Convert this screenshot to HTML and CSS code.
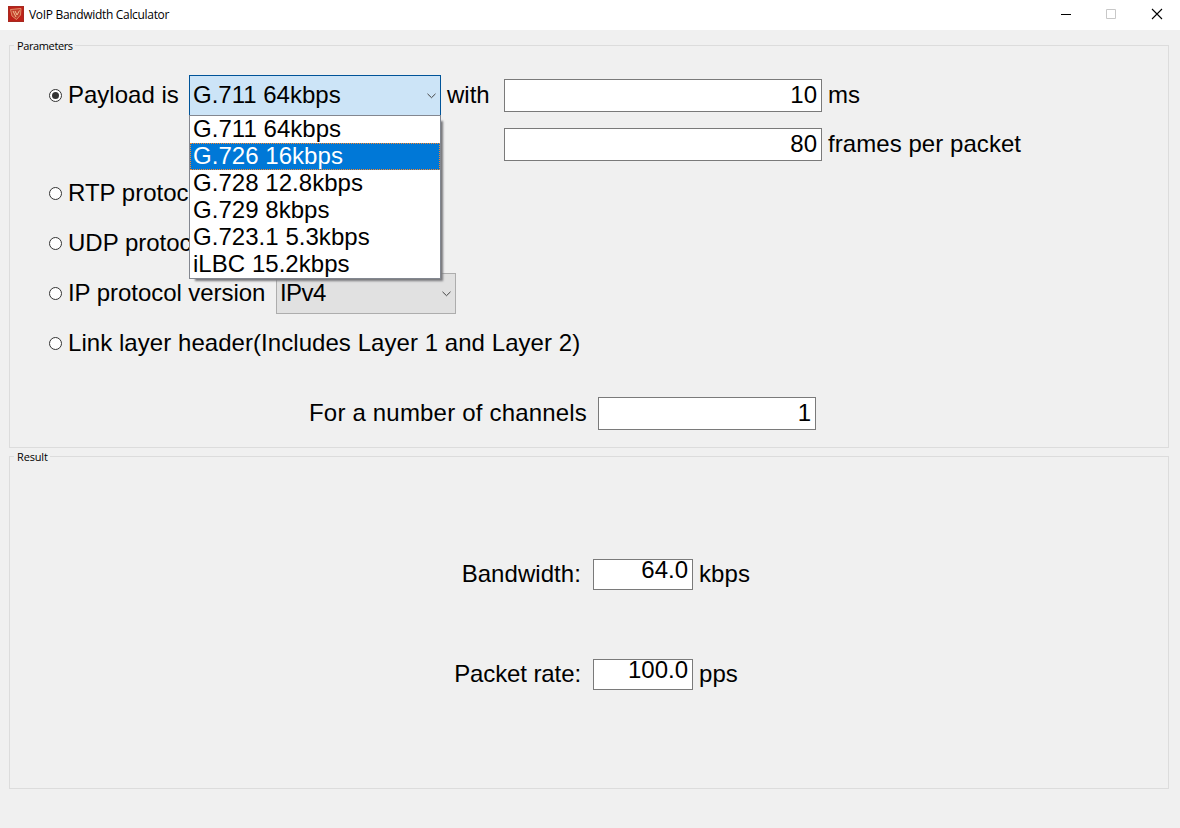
FILE: index.html
```html
<!DOCTYPE html>
<html lang="en">
<head>
<meta charset="utf-8">
<title>VoIP Bandwidth Calculator</title>
<link rel="stylesheet" href="styles.css">
</head>
<body>
<header class="titlebar">
  <svg class="app-icon" width="16" height="16" viewBox="0 0 16 16">
    <rect width="16" height="16" fill="#bd2119"/>
    <path d="M0.5 .5h15v15H.5z" fill="none" stroke="#a62a20"/>
    <path d="M2.500 3.500L13 2.500L12.500 9L8.500 13.500L4 10Z" fill="#c2402c" stroke="#e08d68"/>
    <path d="M5 5L8 11M7 5l2 4L11.500 4.500" fill="none" stroke="#f2bd91"/>
  </svg>
  <h1 class="title">VoIP Bandwidth Calculator</h1>
  <div class="window-buttons">
    <svg width="45" height="30" viewBox="0 0 45 30"><path d="M18 14.5h10" stroke="#000"/></svg>
    <svg width="45" height="30" viewBox="0 0 45 30"><path d="M18.500 9.500h9v9h-9z" fill="none" stroke="#c8c8c8"/></svg>
    <svg width="45" height="30" viewBox="0 0 45 30"><path d="M19 9l10 10M29 9l-10 10" stroke="#000" stroke-width="1.1"/></svg>
  </div>
</header>
<main class="content">
  <section class="group parameters">
    <h2 class="legend">Parameters</h2>
    <div class="row payload">
      <span class="radio checked"></span>
      <span class="label payload-label">Payload is</span>
      <div class="combo open">
        <span>G.711 64kbps</span>
        <svg class="chevron" width="9" height="6" viewBox="0 0 9 6"><path d="M.5 .8L4.500 4.700L8.500 .8" fill="none" stroke="#444"/></svg>
        <ul class="menu">
          <li>G.711 64kbps</li>
          <li class="selected">G.726 16kbps</li>
          <li>G.728 12.8kbps</li>
          <li>G.729 8kbps</li>
          <li>G.723.1 5.3kbps</li>
          <li>iLBC 15.2kbps</li>
        </ul>
      </div>
      <span class="with">with</span>
      <div class="field wide">10</div>
      <span class="unit">ms</span>
    </div>
    <div class="row frames">
      <div class="field wide">80</div>
      <span class="unit">frames per packet</span>
    </div>
    <div class="row"><span class="radio"></span><span class="label">RTP protocol</span></div>
    <div class="row"><span class="radio"></span><span class="label">UDP protocol</span></div>
    <div class="row"><span class="radio"></span><span class="label ip-label">IP protocol version</span>
      <div class="combo version"><span>IPv4</span>
        <svg class="chevron" width="9" height="6" viewBox="0 0 9 6"><path d="M.5 .8L4.500 4.700L8.500 .8" fill="none" stroke="#444"/></svg>
      </div>
    </div>
    <div class="row"><span class="radio"></span><span class="label link-label">Link layer header(Includes Layer 1 and Layer 2)</span></div>
    <div class="row channels"><span class="caption">For a number of channels</span><div class="field count">1</div></div>
  </section>
  <section class="group result">
    <h2 class="legend">Result</h2>
    <div class="result-row"><span class="caption">Bandwidth:</span><div class="output">64.0</div><span class="unit">kbps</span></div>
    <div class="result-row"><span class="caption rate">Packet rate:</span><div class="output">100.0</div><span class="unit">pps</span></div>
  </section>
</main>
</body>
</html>
```
FILE: styles.css
```css
* { box-sizing: border-box; }
body {
  margin: 0;
  height: 828px;
  overflow: hidden;
  background: #f0f0f0;
  color: #000;
  font: 24px/28px "Liberation Sans", Arial, sans-serif;
  white-space: nowrap;
}
.titlebar {
  display: flex;
  align-items: center;
  height: 30px;
  padding-left: 8px;
  background: #fff;
}
.app-icon { margin-top: -2px; }
.title {
  margin: 0 0 0 5px;
  font: 12px/16px "Open Sans", "Noto Sans", sans-serif;
  letter-spacing: -0.32px;
}
.window-buttons { display: flex; margin-left: auto; margin-right: 2px; }
.content { display: flex; flex-direction: column; gap: 8px; padding: 15px 11px 0 9px; }
.group { border: 1px solid #dcdcdc; }
.parameters { height: 403px; }
.result { height: 333px; }
.legend {
  width: fit-content;
  height: 14px;
  margin: -7px 0 0 4px;
  padding: 0 2px 0 3px;
  background: #f0f0f0;
  font: 11px/14px "Open Sans", "Noto Sans", sans-serif;
  letter-spacing: -0.38px;
}
.result .legend { line-height: 13px; letter-spacing: -0.15px; }
.row { display: flex; align-items: center; height: 50px; padding-left: 39px; }
.payload { margin-top: 17px; }
.frames { height: 48px; padding-left: 494px; }
.channels { margin-top: 20px; padding-left: 299px; }
.radio {
  flex: none;
  display: grid;
  place-items: center;
  width: 13px;
  height: 13px;
  margin-right: 6px;
  border: 1px solid #333;
  border-radius: 50%;
  background: #fff;
}
.radio.checked::after { content: ""; width: 7px; height: 7px; border-radius: 50%; background: #333; }
.payload-label { width: 121px; }
.ip-label { width: 208px; letter-spacing: -0.05px; }
.link-label { letter-spacing: 0.055px; }
.combo {
  position: relative;
  display: flex;
  align-items: center;
  justify-content: space-between;
  width: 252px;
  height: 41px;
  padding: 0 4px 0 3px;
  border: 1px solid #005499;
  background: #cce4f7;
}
.chevron { margin-top: 2px; }
.version { width: 180px; border-color: #adadad; background: #e1e1e1; letter-spacing: -0.6px; }
.menu {
  position: absolute;
  z-index: 2;
  top: 39px;
  left: -1px;
  width: 252px;
  margin: 0;
  padding: 0;
  list-style: none;
  background: #fff;
  border: 1px solid #838790;
  box-shadow: 4px 4px 2px -2px #77777b;
}
.menu li { height: 27px; padding-left: 3px; line-height: 25px; letter-spacing: 0.04px; }
.menu .selected {
  padding-left: 2px;
  border: 1px dotted #ff8728;
  background: #0078d7;
  color: #fff;
  line-height: 23px;
}
.with { width: 63px; padding-left: 6px; }
.field {
  height: 33px;
  padding-right: 4px;
  border: 1px solid #7a7a7a;
  background: #fff;
  line-height: 29px;
  text-align: right;
}
.wide { width: 318px; }
.channels .caption { width: 278px; letter-spacing: 0.19px; }
.count { width: 218px; margin-left: 11px; }
.unit { margin-left: 6px; letter-spacing: 0.06px; }
.result-row { display: flex; align-items: center; height: 100px; }
.result-row .caption { width: 571px; text-align: right; letter-spacing: 0.06px; }
.result-row .rate { letter-spacing: -0.1px; }
.result .legend + .result-row { margin-top: 60px; }
.output {
  width: 100px;
  height: 31px;
  margin-left: 12px;
  padding-right: 4px;
  border: 1px solid #7a7a7a;
  background: #fff;
  line-height: 20px;
  text-align: right;
}
```
